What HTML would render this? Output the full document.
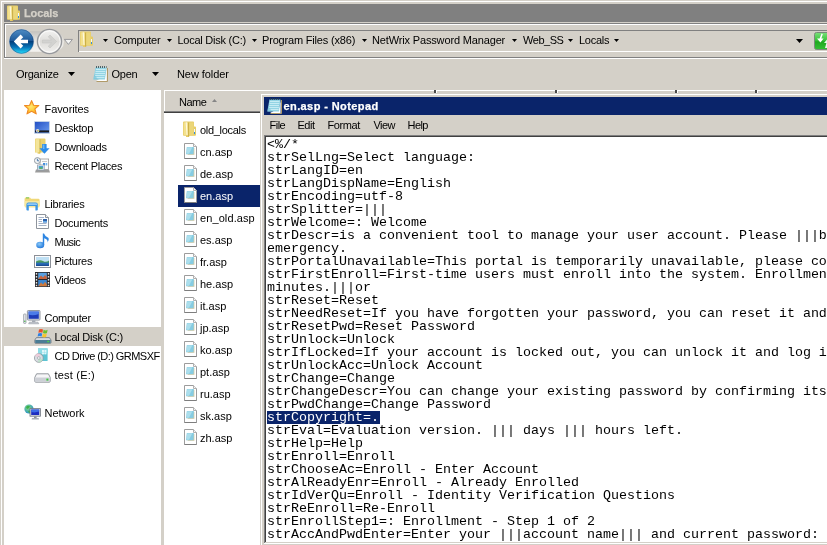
<!DOCTYPE html>
<html><head><meta charset="utf-8"><title>Locals</title>
<style>
html,body{margin:0;padding:0;}
body{width:827px;height:545px;overflow:hidden;background:#D4D0C8;position:relative;font-family:"Liberation Sans",sans-serif;font-size:11px;}
#root{position:absolute;left:0;top:0;width:827px;height:545px;overflow:hidden;background:#D4D0C8;will-change:transform;}
#root div,#root span.t,#root svg,#root pre{position:absolute;}
.t{white-space:pre;line-height:13px;height:13px;font-size:11px;color:#000;}
pre{margin:0;font-family:"Liberation Mono",monospace;font-size:13.33px;line-height:13px;white-space:pre;color:#000;}
.sel{color:#fff;}
</style></head><body><div id="root">

<div style="left:1px;top:1px;width:826px;height:1px;background:#FFFFFF;"></div>
<div style="left:1px;top:1px;width:1px;height:544px;background:#FFFFFF;"></div>
<div style="left:4px;top:4px;width:823px;height:18px;background:#808080;"></div>
<svg style="left:6px;top:5px" width="16" height="17" viewBox="0 0 16 17">
<path d="M1 1.2 Q1 0.4 2 0.4 H11 Q12 0.4 12 1.4 V5.5 H13 Q14 5.5 14 6.5 V14 Q14 14.8 13 14.8 H7 V16 H4 V14.8 H2 Q1 14.8 1 14 Z" fill="#E6CC66"/>
<path d="M1.6 1.4 H6.4 V14.2 H1.6 Z" fill="#F3E18E"/>
<path d="M3.6 1.2 H4.8 L5.4 14 H4.6 Z" fill="#FFFDF0" opacity=".85"/>
<path d="M6.1 1.4 H7.3 V15.6 H6.1 Z" fill="#C9AC45"/>
<path d="M7.2 1.4 H11.6 V14.4 H7.2 Z" fill="#EBD679"/>
<rect x="12" y="8" width="1" height="3" fill="#F4F8FF"/><rect x="12" y="11" width="1" height="2" fill="#2E8FE0"/>
</svg>
<span class="t" style="left:24px;top:7px;letter-spacing:-0.1px;color:#D4D0C8;font-weight:bold;-webkit-text-stroke:0.25px;">Locals</span>
<div style="left:4px;top:23px;width:823px;height:1px;background:#808080;"></div>
<div style="left:4px;top:23px;width:1px;height:35px;background:#808080;"></div>
<div style="left:5px;top:24px;width:822px;height:1px;background:#FFFFFF;"></div>
<div style="left:5px;top:24px;width:1px;height:33px;background:#FFFFFF;"></div>
<div style="left:4px;top:57px;width:823px;height:1px;background:#808080;"></div>
<div style="left:4px;top:58px;width:823px;height:1px;background:#FFFFFF;"></div>
<svg style="left:6px;top:28px" width="70" height="28" viewBox="0 0 70 28">
<defs>
<linearGradient id="pill" x1="0" y1="0" x2="0" y2="1"><stop offset="0" stop-color="#C4C2BE"/><stop offset=".5" stop-color="#E9E7E3"/><stop offset="1" stop-color="#F4F3F0"/></linearGradient>
<linearGradient id="bk" x1="0" y1="0" x2="0" y2="1"><stop offset="0" stop-color="#4E8CC4"/><stop offset=".48" stop-color="#1C5898"/><stop offset=".5" stop-color="#033F7C"/><stop offset=".74" stop-color="#0874B8"/><stop offset="1" stop-color="#24DCFC"/></linearGradient>
<linearGradient id="bk2" x1="0" y1="0" x2="0" y2="1"><stop offset="0" stop-color="#034E8E"/><stop offset=".6" stop-color="#0A7CC0"/><stop offset="1" stop-color="#18D8FA"/></linearGradient>
<linearGradient id="fw" x1="0" y1="0" x2="0" y2="1"><stop offset="0" stop-color="#F4F4F3"/><stop offset=".5" stop-color="#DEDDDA"/><stop offset="1" stop-color="#F2F1EF"/></linearGradient>
<clipPath id="ct"><rect x="0" y="0" width="70" height="13.5"/></clipPath>
<clipPath id="cb"><rect x="0" y="13.5" width="70" height="20"/></clipPath>
</defs>
<rect x="8" y="3.2" width="50" height="20.6" rx="10" fill="url(#pill)"/>
<circle cx="15.5" cy="13.5" r="12.7" fill="#C6CFD8"/>
<circle cx="15.5" cy="13.5" r="11.9" fill="url(#bk)"/>
<circle cx="15.5" cy="13.5" r="11.9" fill="none" stroke="#0B3C74" stroke-width=".8" opacity=".55"/>
<path d="M7.8 13.5 L14.6 6.6 L17.2 9.2 L14.6 11.7 H22 V15.3 H14.6 L17.2 17.8 L14.6 20.4 Z" fill="#fff"/>
<circle cx="43.5" cy="13.5" r="12.1" fill="url(#fw)" stroke="#96989C" stroke-width="1.3"/>
<circle cx="43.5" cy="13.5" r="10.6" fill="none" stroke="#fff" stroke-width="1" opacity=".7"/>
<path d="M50.6 13.5 L44 7 L42.2 8.8 L45.4 12 H36.4 V15 H45.4 L42.2 18.2 L44 20 Z" fill="#D2D2D0" stroke="#C2C2C0" stroke-width=".5"/>
<path d="M58.4 11.4 H66.4 L62.4 16.4 Z" fill="#F4F4F2" stroke="#8E9094" stroke-width=".9"/>
</svg>
<div style="left:78px;top:30px;width:749px;height:1px;background:#808080;"></div>
<div style="left:78px;top:30px;width:1px;height:22px;background:#808080;"></div>
<div style="left:79px;top:51px;width:748px;height:1px;background:#FFFFFF;"></div>
<svg style="left:79px;top:31px" width="16" height="17" viewBox="0 0 16 17">
<path d="M1 1.2 Q1 0.4 2 0.4 H11 Q12 0.4 12 1.4 V5.5 H13 Q14 5.5 14 6.5 V14 Q14 14.8 13 14.8 H7 V16 H4 V14.8 H2 Q1 14.8 1 14 Z" fill="#E6CC66"/>
<path d="M1.6 1.4 H6.4 V14.2 H1.6 Z" fill="#F3E18E"/>
<path d="M3.6 1.2 H4.8 L5.4 14 H4.6 Z" fill="#FFFDF0" opacity=".85"/>
<path d="M6.1 1.4 H7.3 V15.6 H6.1 Z" fill="#C9AC45"/>
<path d="M7.2 1.4 H11.6 V14.4 H7.2 Z" fill="#EBD679"/>
<rect x="12" y="8" width="1" height="3" fill="#F4F8FF"/><rect x="12" y="11" width="1" height="2" fill="#2E8FE0"/>
</svg>
<svg style="left:103px;top:39px" width="5" height="3" viewBox="0 0 5 3"><path d="M0 0 H5 L2.5 3 Z" fill="#000"/></svg>
<span class="t" style="left:114px;top:34px;letter-spacing:-0.25px;">Computer</span>
<svg style="left:167px;top:39px" width="5" height="3" viewBox="0 0 5 3"><path d="M0 0 H5 L2.5 3 Z" fill="#000"/></svg>
<span class="t" style="left:177.5px;top:34px;letter-spacing:-0.25px;">Local Disk (C:)</span>
<svg style="left:252px;top:39px" width="5" height="3" viewBox="0 0 5 3"><path d="M0 0 H5 L2.5 3 Z" fill="#000"/></svg>
<span class="t" style="left:262px;top:34px;letter-spacing:-0.18px;">Program Files (x86)</span>
<svg style="left:362px;top:39px" width="5" height="3" viewBox="0 0 5 3"><path d="M0 0 H5 L2.5 3 Z" fill="#000"/></svg>
<span class="t" style="left:372px;top:34px;letter-spacing:-0.15px;">NetWrix Password Manager</span>
<svg style="left:512px;top:39px" width="5" height="3" viewBox="0 0 5 3"><path d="M0 0 H5 L2.5 3 Z" fill="#000"/></svg>
<span class="t" style="left:523px;top:34px;letter-spacing:-0.45px;">Web_SS</span>
<svg style="left:568px;top:39px" width="5" height="3" viewBox="0 0 5 3"><path d="M0 0 H5 L2.5 3 Z" fill="#000"/></svg>
<span class="t" style="left:579px;top:34px;letter-spacing:-0.25px;">Locals</span>
<svg style="left:614px;top:39px" width="5" height="3" viewBox="0 0 5 3"><path d="M0 0 H5 L2.5 3 Z" fill="#000"/></svg>
<svg style="left:796px;top:39px" width="7" height="4" viewBox="0 0 7 4"><path d="M0 0 H7 L3.5 4 Z" fill="#000"/></svg>
<svg style="left:814px;top:32px" width="14" height="18" viewBox="0 0 14 18">
<defs><linearGradient id="gr" x1="0" y1="0" x2="0" y2="1"><stop offset="0" stop-color="#7BE07B"/><stop offset=".45" stop-color="#3CC43C"/><stop offset=".55" stop-color="#1FA81F"/><stop offset="1" stop-color="#35C035"/></linearGradient></defs>
<rect x="0.5" y="0.5" width="20" height="17" rx="2" fill="url(#gr)" stroke="#7A8A7A"/>
<path d="M7.6 1.6 L5.6 6.6 H3 L6.4 10.6 L9.6 6.6 H7.4 L8.8 2 Z" fill="#fff"/>
<path d="M13.4 7 L10 11 H12.4 L11 16 L14 16 L14 7 Z" fill="#E8F8E8"/>
</svg>
<span class="t" style="left:16px;top:68px;letter-spacing:-0.25px;">Organize</span>
<svg style="left:68px;top:72px" width="7" height="4" viewBox="0 0 7 4"><path d="M0 0 H7 L3.5 4 Z" fill="#000"/></svg>
<svg style="left:93px;top:66px" width="16" height="17" viewBox="0 0 16 17">
<path d="M3.5 15.5 H14.5 V2" fill="none" stroke="#B09A68" stroke-width="1"/>
<path d="M3 15 L13.6 15 L13.8 2 L12 10 Z" fill="#fff"/>
<path d="M2.4 1.4 H13.6 L12 13.4 H0.4 Z" fill="#93D4E4"/>
<path d="M3 3.5 H12.6 M2.6 5.5 H12.3 M2.3 7.5 H12 M2 9.5 H11.8 M1.6 11.5 H11.5" stroke="#C6ECF4" stroke-width="1"/>
<path d="M1.2 8 L0.4 13.4 H5 Z" fill="#7CC6DA" opacity=".7"/>
<path d="M3 1 h1 M5 1 h1 M7 1 h1 M9 1 h1 M11 1 h1 M13 1 h0.6" stroke="#27404A" stroke-width="1.4"/>
</svg>
<span class="t" style="left:111.5px;top:68px;letter-spacing:-0.25px;">Open</span>
<svg style="left:152px;top:72px" width="7" height="4" viewBox="0 0 7 4"><path d="M0 0 H7 L3.5 4 Z" fill="#000"/></svg>
<span class="t" style="left:177px;top:68px;letter-spacing:-0.07px;">New folder</span>
<div style="left:4px;top:90px;width:157px;height:455px;background:#fff;"></div>
<div style="left:4px;top:327px;width:157px;height:19px;background:#D4D0C8;"></div>
<svg style="left:24px;top:100px" width="16" height="15" viewBox="0 0 16 15">
<defs><radialGradient id="sg" cx=".45" cy=".45" r=".6"><stop offset="0" stop-color="#FFE873"/><stop offset=".6" stop-color="#FFC733"/><stop offset="1" stop-color="#F59A23"/></radialGradient></defs>
<path d="M7.6 0.6 L9.6 5.2 L14.8 5.6 L10.9 8.9 L12.2 13.9 L7.6 11.2 L3 13.9 L4.3 8.9 L0.5 5.6 L5.6 5.2 Z" fill="url(#sg)" stroke="#F08A24" stroke-width="1.1" stroke-linejoin="round"/>
</svg>
<span class="t" style="left:44.5px;top:103px;letter-spacing:-0.08px;">Favorites</span>
<svg style="left:34px;top:121px" width="16" height="13" viewBox="0 0 16 13">
<defs><linearGradient id="dg" x1="0" y1="0" x2="1" y2="1"><stop offset="0" stop-color="#2450C4"/><stop offset="1" stop-color="#6A9CF0"/></linearGradient></defs>
<rect x="0.3" y="0.3" width="15.4" height="12.4" fill="#A9BEDD"/>
<rect x="1" y="1" width="14" height="11" fill="url(#dg)"/>
<rect x="1" y="9.4" width="14" height="2" fill="#1C1C1C"/>
<circle cx="3.6" cy="9.8" r="1.7" fill="#E8F0FF"/>
<rect x="2.6" y="8.8" width="1" height="1" fill="#E84A2A"/><rect x="3.7" y="8.8" width="1" height="1" fill="#6BC22E"/><rect x="2.6" y="9.9" width="1" height="1" fill="#2C7BE0"/><rect x="3.7" y="9.9" width="1" height="1" fill="#F7C42A"/>
</svg>
<span class="t" style="left:54.5px;top:122px;letter-spacing:-0.25px;">Desktop</span>
<svg style="left:34px;top:138px" width="16" height="17" viewBox="0 0 16 17">
<path d="M1 1 Q1 0.4 2 0.4 H10.5 Q11.5 0.4 11.5 1.4 V14.5 H6 V15.8 H3.6 V14.5 H1 Z" fill="#E9D170"/>
<path d="M1.6 1.2 H5.6 V14 H1.6 Z" fill="#F4E59A"/>
<path d="M5.6 1.2 H6.4 V15.4 H5.6 Z" fill="#CDB24A"/>
<path d="M8.2 6 H12.6 V10.2 H15.6 L10.4 15.8 L5.4 10.2 H8.2 Z" fill="#2B8CEB"/>
<path d="M9 6.4 H10.4 V11 H9 Z" fill="#6CB6F6"/>
</svg>
<span class="t" style="left:54.5px;top:141px;letter-spacing:-0.25px;">Downloads</span>
<svg style="left:34px;top:157px" width="16" height="16" viewBox="0 0 16 16">
<path d="M2 12.5 H15 L16 15.5 H1 Z" fill="#9C9C9C"/>
<rect x="6" y="2" width="8.6" height="10.5" fill="#FCFCFC" stroke="#9A9A9A" stroke-width=".8"/>
<rect x="8" y="4" width="5" height="1" fill="#C8C8C8"/><rect x="9" y="6" width="2" height="2.4" fill="#3B8AE0"/><rect x="11.6" y="6" width="1.6" height="2.4" fill="#6FB2F0"/>
<rect x="3.6" y="8" width="6.6" height="5" fill="#F4F8FC" stroke="#8C9AA8" stroke-width=".8"/>
<rect x="4.6" y="9" width="4.6" height="2.8" fill="#4AA0D8"/><rect x="5.4" y="10.4" width="3" height="1.4" fill="#56B24A"/>
<circle cx="3.4" cy="3.6" r="3" fill="#F2F4F6" stroke="#8A949C" stroke-width=".9"/>
<path d="M3.4 1.8 V3.8 H5" fill="none" stroke="#3A6EA8" stroke-width=".9"/>
</svg>
<span class="t" style="left:54.5px;top:160px;letter-spacing:-0.25px;">Recent Places</span>
<svg style="left:24px;top:197px" width="16" height="14" viewBox="0 0 16 14">
<path d="M0.6 2 Q0.6 0.6 2 0.6 H6 L7 1.8 H14.4 Q15.6 1.8 15.6 3 V9 H0.6 Z" fill="#F0D878"/>
<path d="M2 0.4 H5 V1.4 H2 Z" fill="#6FC24A"/>
<path d="M0.6 4 H15.6 V9.5 Q15.6 10.6 14.4 10.6 H1.8 Q0.6 10.6 0.6 9.5 Z" fill="#F6E8A0"/>
<path d="M2.4 7.4 Q2.4 5.4 4.4 5.4 H11.8 Q13.8 5.4 13.8 7.4 V12.4 Q13.8 13.4 12.8 13.4 H11.4 V9 H4.8 V13.4 H3.4 Q2.4 13.4 2.4 12.4 Z" fill="#3C96E4"/>
<path d="M3.2 7.2 Q3.2 6.2 4.6 6.2 H11.6 Q13 6.2 13 7.2 V8 H3.2 Z" fill="#8CC8F6"/>
</svg>
<span class="t" style="left:44.5px;top:198px;letter-spacing:-0.25px;">Libraries</span>
<svg style="left:36px;top:214px" width="14" height="16" viewBox="0 0 14 16">
<path d="M0.5 0.5 H9.5 L12.5 3.5 V14.5 H0.5 Z" fill="#fff" stroke="#8E949C"/>
<path d="M9.5 0.5 V3.5 H12.5" fill="#EDEFF2" stroke="#8E949C"/>
<path d="M2.5 3.5 H8 M2.5 5.5 H6 M2.5 7.5 H6 M2.5 9.5 H10.5 M2.5 11.5 H10.5" stroke="#A6B4C8" stroke-width="1"/>
<rect x="7" y="5" width="4" height="3.4" fill="#2C5FA8"/><rect x="7" y="7" width="4" height="1.4" fill="#5FA6E6"/>
</svg>
<span class="t" style="left:54.5px;top:217px;letter-spacing:-0.25px;">Documents</span>
<svg style="left:36px;top:233px" width="14" height="16" viewBox="0 0 14 16">
<defs><radialGradient id="mg" cx=".4" cy=".35" r=".7"><stop offset="0" stop-color="#8CCBFA"/><stop offset="1" stop-color="#1E74D8"/></radialGradient></defs>
<ellipse cx="4.2" cy="12" rx="4" ry="3.2" fill="url(#mg)"/>
<path d="M6.8 12 V0.4 H8 Q8.6 3 12.6 5 Q13.4 7.6 11.4 9.6 Q12.4 6.6 8.2 5.2 V12 Z" fill="#2E86E2"/>
</svg>
<span class="t" style="left:54.5px;top:236px;letter-spacing:-0.6px;">Music</span>
<svg style="left:33.5px;top:255px" width="17" height="13" viewBox="0 0 17 13">
<rect x="0.5" y="0.5" width="16" height="12" fill="#FDFDFD" stroke="#8C9098"/>
<rect x="2" y="2" width="13" height="9" fill="#BFE0F4"/>
<path d="M2 6.6 Q6 4 9 6 T15 5.4 V8 H2 Z" fill="#4E9A5C"/>
<rect x="2" y="7.6" width="13" height="3.4" fill="#2A6CB8"/>
<rect x="2" y="9.6" width="13" height="1.4" fill="#1C4E96"/>
</svg>
<span class="t" style="left:54.5px;top:255px;letter-spacing:-0.25px;">Pictures</span>
<svg style="left:34.5px;top:272px" width="15" height="15" viewBox="0 0 15 15">
<rect x="0" y="0" width="15" height="15" fill="#2A2A2E"/>
<rect x="3.2" y="0.8" width="8.6" height="6.2" fill="#5AA0E0"/>
<path d="M3.2 7 L6 3.6 L8 5.4 L10 3 L11.8 5 V7 Z" fill="#C8643C"/>
<rect x="3.2" y="8" width="8.6" height="6.2" fill="#3C86D0"/>
<path d="M3.2 14.2 L6 10.6 L8 12.4 L10 10 L11.8 12 V14.2 Z" fill="#D07A3C"/>
<g fill="#E6E6E6"><rect x="0.8" y="1" width="1.4" height="1.6"/><rect x="0.8" y="4" width="1.4" height="1.6"/><rect x="0.8" y="7" width="1.4" height="1.6"/><rect x="0.8" y="10" width="1.4" height="1.6"/><rect x="0.8" y="12.8" width="1.4" height="1.4"/>
<rect x="12.8" y="1" width="1.4" height="1.6"/><rect x="12.8" y="4" width="1.4" height="1.6"/><rect x="12.8" y="7" width="1.4" height="1.6"/><rect x="12.8" y="10" width="1.4" height="1.6"/><rect x="12.8" y="12.8" width="1.4" height="1.4"/></g>
</svg>
<span class="t" style="left:54.5px;top:274px;letter-spacing:-0.4px;">Videos</span>
<svg style="left:23px;top:310px" width="18" height="15" viewBox="0 0 18 15">
<rect x="0.6" y="4" width="2.4" height="9.4" rx=".6" fill="#E6E8EC" stroke="#8A9098" stroke-width=".7"/>
<rect x="1.2" y="10.6" width="1.2" height="1.4" fill="#48B848"/>
<rect x="4.4" y="0.5" width="12.6" height="9.6" rx=".8" fill="#D8DCE4" stroke="#7C848E" stroke-width=".8"/>
<rect x="5.6" y="1.6" width="10.2" height="7.2" fill="#1E3CB8"/>
<path d="M5.6 1.6 H15.8 V4 Q10 6 5.6 4.6 Z" fill="#4C7CE8"/>
<rect x="9" y="10.2" width="3.4" height="2" fill="#A8AEB8"/>
<path d="M6.4 12.2 H15 L15.8 13.8 H5.6 Z" fill="#C4C8D0" stroke="#8A9098" stroke-width=".5"/>
</svg>
<span class="t" style="left:44.5px;top:312px;letter-spacing:-0.25px;">Computer</span>
<svg style="left:33.5px;top:328px" width="18" height="16" viewBox="0 0 18 16">
<path d="M2.4 9.6 H15.4 L17 12 V14.6 Q17 15.4 16 15.4 H1.8 Q0.8 15.4 0.8 14.6 V12 Z" fill="#D6DADF" stroke="#5A6670" stroke-width=".7"/>
<rect x="1.2" y="12" width="15.4" height="3" fill="#4A7C94"/>
<rect x="13.2" y="12.8" width="2" height="1.4" fill="#4CD04C"/>
<path d="M5 1.6 Q7 0.4 9 1.6 L8.4 4.8 Q6.6 3.8 4.4 4.8 Z" fill="#E8502A"/>
<path d="M9.6 1.8 Q11.6 3 13.6 1.8 L13 5 Q11 6.2 9 5 Z" fill="#6CC030"/>
<path d="M4.2 5.4 Q6.2 4.4 8.2 5.4 L7.6 8.6 Q5.6 7.6 3.6 8.6 Z" fill="#2C80E4"/>
<path d="M8.8 5.6 Q10.8 6.8 12.8 5.6 L12.2 8.8 Q10.2 10 8.2 8.8 Z" fill="#F8C42C"/>
</svg>
<span class="t" style="left:54.5px;top:331px;letter-spacing:-0.25px;">Local Disk (C:)</span>
<div style="left:4px;top:347px;width:157px;height:19px;overflow:hidden">
</div>
<svg style="left:34px;top:348px" width="14" height="15" viewBox="0 0 14 15">
<path d="M4 0.4 H13.6 V13 H4 Z" fill="#5CC4D4"/>
<path d="M4 0.4 H13.6 V5 Q9 7 4 5 Z" fill="#8CDCE6"/>
<rect x="8" y="2" width="2" height="2" fill="#DFF6FA"/><rect x="10.4" y="2" width="2" height="2" fill="#DFF6FA"/><rect x="8" y="4.4" width="2" height="2" fill="#DFF6FA"/><rect x="10.4" y="4.4" width="2" height="2" fill="#DFF6FA"/>
<circle cx="4.8" cy="10" r="4.4" fill="#D8DCE2" stroke="#8A9098" stroke-width=".7"/>
<path d="M4.8 10 L1 7.6 A4.4 4.4 0 0 1 6 5.8 Z" fill="#F2C8D8" opacity=".8"/>
<path d="M4.8 10 L8.8 11.6 A4.4 4.4 0 0 1 4 14.2 Z" fill="#B8E0C4" opacity=".8"/>
<circle cx="4.8" cy="10" r="1.3" fill="#fff" stroke="#8A9098" stroke-width=".6"/>
</svg>
<span class="t" style="left:54.5px;top:350px;letter-spacing:-0.55px;">CD Drive (D:) GRMSXF</span>
<svg style="left:33.5px;top:372.5px" width="17" height="10" viewBox="0 0 17 10">
<path d="M2.6 0.8 H14.4 L16.2 4.4 V8.2 Q16.2 9.2 15.2 9.2 H1.8 Q0.8 9.2 0.8 8.2 V4.4 Z" fill="#F6F6F8" stroke="#7A8088" stroke-width=".8"/>
<path d="M1.2 4.6 H15.8 V8.2 Q15.8 8.8 15.2 8.8 H1.8 Q1.2 8.8 1.2 8.2 Z" fill="#CDD0D6"/>
<rect x="12.4" y="5.6" width="2" height="2" fill="#3CC83C"/>
</svg>
<span class="t" style="left:54.5px;top:369px;letter-spacing:0.2px;">test (E:)</span>
<svg style="left:24px;top:404px" width="17" height="16" viewBox="0 0 17 16">
<defs><radialGradient id="ng" cx=".4" cy=".35" r=".7"><stop offset="0" stop-color="#8CE07C"/><stop offset="1" stop-color="#1E8AD0"/></radialGradient></defs>
<circle cx="5" cy="5" r="4.6" fill="url(#ng)"/>
<path d="M2 3 Q4 1 6 2.4 Q5 4.4 3 5 Z M4 7 Q6 6 7 8 L5.4 9.4 Z" fill="#3CB04C"/>
<rect x="6" y="4.6" width="10.4" height="7.6" fill="#D4D8E0" stroke="#6E7680" stroke-width=".8"/>
<rect x="7.2" y="5.6" width="8" height="5.4" fill="#1C2CC0"/>
<path d="M7.2 5.6 H15.2 V7.6 Q11 9 7.2 8 Z" fill="#3C6CE8"/>
<rect x="10" y="12.4" width="2.6" height="1.6" fill="#8A9098"/>
<path d="M8 14 H14.6 L15 15.4 H7.6 Z" fill="#A8AEB8"/>
</svg>
<span class="t" style="left:44.5px;top:407px;letter-spacing:-0.05px;">Network</span>
<div style="left:161px;top:90px;width:3px;height:455px;background:#D4D0C8;"></div>
<div style="left:164px;top:90px;width:663px;height:455px;background:#fff;"></div>
<div style="left:164px;top:90px;width:663px;height:1px;background:#FFFFFF;"></div>
<div style="left:164px;top:91px;width:1px;height:20px;background:#FFFFFF;"></div>
<div style="left:165px;top:91px;width:662px;height:20px;background:#D4D0C8;"></div>
<div style="left:164px;top:111px;width:663px;height:1px;background:#808080;"></div>
<div style="left:164px;top:112px;width:663px;height:1px;background:#404040;"></div>
<span class="t" style="left:179px;top:96px;letter-spacing:-0.5px;">Name</span>
<svg style="left:212px;top:99px" width="5" height="3" viewBox="0 0 5 3"><path d="M2.5 0 L5 3 H0 Z" fill="#858585"/></svg>
<div style="left:434px;top:90px;width:2px;height:3px;background:#4A4A4A;"></div>
<div style="left:436px;top:90px;width:1px;height:3px;background:#FFFFFF;"></div>
<div style="left:555px;top:90px;width:2px;height:3px;background:#4A4A4A;"></div>
<div style="left:557px;top:90px;width:1px;height:3px;background:#FFFFFF;"></div>
<div style="left:675px;top:90px;width:2px;height:3px;background:#4A4A4A;"></div>
<div style="left:677px;top:90px;width:1px;height:3px;background:#FFFFFF;"></div>
<div style="left:755px;top:90px;width:2px;height:3px;background:#4A4A4A;"></div>
<div style="left:757px;top:90px;width:1px;height:3px;background:#FFFFFF;"></div>
<svg style="left:182px;top:121px" width="16" height="17" viewBox="0 0 16 17">
<path d="M1 1.2 Q1 0.4 2 0.4 H11 Q12 0.4 12 1.4 V5.5 H13 Q14 5.5 14 6.5 V14 Q14 14.8 13 14.8 H7 V16 H4 V14.8 H2 Q1 14.8 1 14 Z" fill="#E6CC66"/>
<path d="M1.6 1.4 H6.4 V14.2 H1.6 Z" fill="#F3E18E"/>
<path d="M3.6 1.2 H4.8 L5.4 14 H4.6 Z" fill="#FFFDF0" opacity=".85"/>
<path d="M6.1 1.4 H7.3 V15.6 H6.1 Z" fill="#C9AC45"/>
<path d="M7.2 1.4 H11.6 V14.4 H7.2 Z" fill="#EBD679"/>
<rect x="12" y="8" width="1" height="3" fill="#F4F8FF"/><rect x="12" y="11" width="1" height="2" fill="#2E8FE0"/>
</svg>
<span class="t" style="left:200px;top:124px;letter-spacing:-0.3px;">old_locals</span>
<svg style="left:184px;top:143px" width="14" height="17" viewBox="0 0 14 17">
<path d="M0.5 0.5 H9.5 L12.5 3.5 V15.5 H0.5 Z" fill="#fff" stroke="#9C9C9C"/>
<path d="M0.5 15.5 H12.5" stroke="#7E7E7E"/>
<path d="M9.5 0.5 V3.5 H12.5" fill="#F4F4F4" stroke="#B0B0B0"/>
<path d="M3.6 5 H10.4 V11.8 H3.6 Z" fill="#D6C79C"/>
<path d="M2.8 4 H9.9 L9.5 11.2 H2 Z" fill="#86CCE2"/>
<path d="M3.2 4.3 H8.4 L5 10.8 H2.4 Z" fill="#B4E2EF" opacity=".8"/>
</svg>
<span class="t" style="left:200px;top:146px;">cn.asp</span>
<svg style="left:184px;top:165px" width="14" height="17" viewBox="0 0 14 17">
<path d="M0.5 0.5 H9.5 L12.5 3.5 V15.5 H0.5 Z" fill="#fff" stroke="#9C9C9C"/>
<path d="M0.5 15.5 H12.5" stroke="#7E7E7E"/>
<path d="M9.5 0.5 V3.5 H12.5" fill="#F4F4F4" stroke="#B0B0B0"/>
<path d="M3.6 5 H10.4 V11.8 H3.6 Z" fill="#D6C79C"/>
<path d="M2.8 4 H9.9 L9.5 11.2 H2 Z" fill="#86CCE2"/>
<path d="M3.2 4.3 H8.4 L5 10.8 H2.4 Z" fill="#B4E2EF" opacity=".8"/>
</svg>
<span class="t" style="left:200px;top:168px;">de.asp</span>
<div style="left:178px;top:185px;width:649px;height:22px;background:#0A246A;"></div>
<svg style="left:184px;top:187px" width="14" height="17" viewBox="0 0 14 17">
<path d="M0.5 0.5 H9.5 L12.5 3.5 V15.5 H0.5 Z" fill="#fff" stroke="#9C9C9C"/>
<path d="M0.5 15.5 H12.5" stroke="#7E7E7E"/>
<path d="M9.5 0.5 V3.5 H12.5" fill="#F4F4F4" stroke="#B0B0B0"/>
<path d="M3.6 5 H10.4 V11.8 H3.6 Z" fill="#D6C79C"/>
<path d="M2.8 4 H9.9 L9.5 11.2 H2 Z" fill="#86CCE2"/>
<path d="M3.2 4.3 H8.4 L5 10.8 H2.4 Z" fill="#B4E2EF" opacity=".8"/>
</svg>
<span class="t" style="left:200px;top:190px;color:#fff;">en.asp</span>
<svg style="left:184px;top:209px" width="14" height="17" viewBox="0 0 14 17">
<path d="M0.5 0.5 H9.5 L12.5 3.5 V15.5 H0.5 Z" fill="#fff" stroke="#9C9C9C"/>
<path d="M0.5 15.5 H12.5" stroke="#7E7E7E"/>
<path d="M9.5 0.5 V3.5 H12.5" fill="#F4F4F4" stroke="#B0B0B0"/>
<path d="M3.6 5 H10.4 V11.8 H3.6 Z" fill="#D6C79C"/>
<path d="M2.8 4 H9.9 L9.5 11.2 H2 Z" fill="#86CCE2"/>
<path d="M3.2 4.3 H8.4 L5 10.8 H2.4 Z" fill="#B4E2EF" opacity=".8"/>
</svg>
<span class="t" style="left:200px;top:212px;letter-spacing:0.1px;">en_old.asp</span>
<svg style="left:184px;top:231px" width="14" height="17" viewBox="0 0 14 17">
<path d="M0.5 0.5 H9.5 L12.5 3.5 V15.5 H0.5 Z" fill="#fff" stroke="#9C9C9C"/>
<path d="M0.5 15.5 H12.5" stroke="#7E7E7E"/>
<path d="M9.5 0.5 V3.5 H12.5" fill="#F4F4F4" stroke="#B0B0B0"/>
<path d="M3.6 5 H10.4 V11.8 H3.6 Z" fill="#D6C79C"/>
<path d="M2.8 4 H9.9 L9.5 11.2 H2 Z" fill="#86CCE2"/>
<path d="M3.2 4.3 H8.4 L5 10.8 H2.4 Z" fill="#B4E2EF" opacity=".8"/>
</svg>
<span class="t" style="left:200px;top:234px;">es.asp</span>
<svg style="left:184px;top:253px" width="14" height="17" viewBox="0 0 14 17">
<path d="M0.5 0.5 H9.5 L12.5 3.5 V15.5 H0.5 Z" fill="#fff" stroke="#9C9C9C"/>
<path d="M0.5 15.5 H12.5" stroke="#7E7E7E"/>
<path d="M9.5 0.5 V3.5 H12.5" fill="#F4F4F4" stroke="#B0B0B0"/>
<path d="M3.6 5 H10.4 V11.8 H3.6 Z" fill="#D6C79C"/>
<path d="M2.8 4 H9.9 L9.5 11.2 H2 Z" fill="#86CCE2"/>
<path d="M3.2 4.3 H8.4 L5 10.8 H2.4 Z" fill="#B4E2EF" opacity=".8"/>
</svg>
<span class="t" style="left:200px;top:256px;">fr.asp</span>
<svg style="left:184px;top:275px" width="14" height="17" viewBox="0 0 14 17">
<path d="M0.5 0.5 H9.5 L12.5 3.5 V15.5 H0.5 Z" fill="#fff" stroke="#9C9C9C"/>
<path d="M0.5 15.5 H12.5" stroke="#7E7E7E"/>
<path d="M9.5 0.5 V3.5 H12.5" fill="#F4F4F4" stroke="#B0B0B0"/>
<path d="M3.6 5 H10.4 V11.8 H3.6 Z" fill="#D6C79C"/>
<path d="M2.8 4 H9.9 L9.5 11.2 H2 Z" fill="#86CCE2"/>
<path d="M3.2 4.3 H8.4 L5 10.8 H2.4 Z" fill="#B4E2EF" opacity=".8"/>
</svg>
<span class="t" style="left:200px;top:278px;">he.asp</span>
<svg style="left:184px;top:297px" width="14" height="17" viewBox="0 0 14 17">
<path d="M0.5 0.5 H9.5 L12.5 3.5 V15.5 H0.5 Z" fill="#fff" stroke="#9C9C9C"/>
<path d="M0.5 15.5 H12.5" stroke="#7E7E7E"/>
<path d="M9.5 0.5 V3.5 H12.5" fill="#F4F4F4" stroke="#B0B0B0"/>
<path d="M3.6 5 H10.4 V11.8 H3.6 Z" fill="#D6C79C"/>
<path d="M2.8 4 H9.9 L9.5 11.2 H2 Z" fill="#86CCE2"/>
<path d="M3.2 4.3 H8.4 L5 10.8 H2.4 Z" fill="#B4E2EF" opacity=".8"/>
</svg>
<span class="t" style="left:200px;top:300px;">it.asp</span>
<svg style="left:184px;top:319px" width="14" height="17" viewBox="0 0 14 17">
<path d="M0.5 0.5 H9.5 L12.5 3.5 V15.5 H0.5 Z" fill="#fff" stroke="#9C9C9C"/>
<path d="M0.5 15.5 H12.5" stroke="#7E7E7E"/>
<path d="M9.5 0.5 V3.5 H12.5" fill="#F4F4F4" stroke="#B0B0B0"/>
<path d="M3.6 5 H10.4 V11.8 H3.6 Z" fill="#D6C79C"/>
<path d="M2.8 4 H9.9 L9.5 11.2 H2 Z" fill="#86CCE2"/>
<path d="M3.2 4.3 H8.4 L5 10.8 H2.4 Z" fill="#B4E2EF" opacity=".8"/>
</svg>
<span class="t" style="left:200px;top:322px;">jp.asp</span>
<svg style="left:184px;top:341px" width="14" height="17" viewBox="0 0 14 17">
<path d="M0.5 0.5 H9.5 L12.5 3.5 V15.5 H0.5 Z" fill="#fff" stroke="#9C9C9C"/>
<path d="M0.5 15.5 H12.5" stroke="#7E7E7E"/>
<path d="M9.5 0.5 V3.5 H12.5" fill="#F4F4F4" stroke="#B0B0B0"/>
<path d="M3.6 5 H10.4 V11.8 H3.6 Z" fill="#D6C79C"/>
<path d="M2.8 4 H9.9 L9.5 11.2 H2 Z" fill="#86CCE2"/>
<path d="M3.2 4.3 H8.4 L5 10.8 H2.4 Z" fill="#B4E2EF" opacity=".8"/>
</svg>
<span class="t" style="left:200px;top:344px;">ko.asp</span>
<svg style="left:184px;top:363px" width="14" height="17" viewBox="0 0 14 17">
<path d="M0.5 0.5 H9.5 L12.5 3.5 V15.5 H0.5 Z" fill="#fff" stroke="#9C9C9C"/>
<path d="M0.5 15.5 H12.5" stroke="#7E7E7E"/>
<path d="M9.5 0.5 V3.5 H12.5" fill="#F4F4F4" stroke="#B0B0B0"/>
<path d="M3.6 5 H10.4 V11.8 H3.6 Z" fill="#D6C79C"/>
<path d="M2.8 4 H9.9 L9.5 11.2 H2 Z" fill="#86CCE2"/>
<path d="M3.2 4.3 H8.4 L5 10.8 H2.4 Z" fill="#B4E2EF" opacity=".8"/>
</svg>
<span class="t" style="left:200px;top:366px;">pt.asp</span>
<svg style="left:184px;top:385px" width="14" height="17" viewBox="0 0 14 17">
<path d="M0.5 0.5 H9.5 L12.5 3.5 V15.5 H0.5 Z" fill="#fff" stroke="#9C9C9C"/>
<path d="M0.5 15.5 H12.5" stroke="#7E7E7E"/>
<path d="M9.5 0.5 V3.5 H12.5" fill="#F4F4F4" stroke="#B0B0B0"/>
<path d="M3.6 5 H10.4 V11.8 H3.6 Z" fill="#D6C79C"/>
<path d="M2.8 4 H9.9 L9.5 11.2 H2 Z" fill="#86CCE2"/>
<path d="M3.2 4.3 H8.4 L5 10.8 H2.4 Z" fill="#B4E2EF" opacity=".8"/>
</svg>
<span class="t" style="left:200px;top:388px;">ru.asp</span>
<svg style="left:184px;top:407px" width="14" height="17" viewBox="0 0 14 17">
<path d="M0.5 0.5 H9.5 L12.5 3.5 V15.5 H0.5 Z" fill="#fff" stroke="#9C9C9C"/>
<path d="M0.5 15.5 H12.5" stroke="#7E7E7E"/>
<path d="M9.5 0.5 V3.5 H12.5" fill="#F4F4F4" stroke="#B0B0B0"/>
<path d="M3.6 5 H10.4 V11.8 H3.6 Z" fill="#D6C79C"/>
<path d="M2.8 4 H9.9 L9.5 11.2 H2 Z" fill="#86CCE2"/>
<path d="M3.2 4.3 H8.4 L5 10.8 H2.4 Z" fill="#B4E2EF" opacity=".8"/>
</svg>
<span class="t" style="left:200px;top:410px;">sk.asp</span>
<svg style="left:184px;top:429px" width="14" height="17" viewBox="0 0 14 17">
<path d="M0.5 0.5 H9.5 L12.5 3.5 V15.5 H0.5 Z" fill="#fff" stroke="#9C9C9C"/>
<path d="M0.5 15.5 H12.5" stroke="#7E7E7E"/>
<path d="M9.5 0.5 V3.5 H12.5" fill="#F4F4F4" stroke="#B0B0B0"/>
<path d="M3.6 5 H10.4 V11.8 H3.6 Z" fill="#D6C79C"/>
<path d="M2.8 4 H9.9 L9.5 11.2 H2 Z" fill="#86CCE2"/>
<path d="M3.2 4.3 H8.4 L5 10.8 H2.4 Z" fill="#B4E2EF" opacity=".8"/>
</svg>
<span class="t" style="left:200px;top:432px;">zh.asp</span>
<div style="left:260px;top:93px;width:567px;height:452px;background:#D4D0C8;"></div>
<div style="left:261px;top:94px;width:566px;height:1px;background:#FFFFFF;"></div>
<div style="left:261px;top:94px;width:1px;height:451px;background:#FFFFFF;"></div>
<div style="left:264px;top:97px;width:563px;height:18px;background:#0A246A;"></div>
<svg style="left:267px;top:98px" width="16" height="17" viewBox="0 0 16 17">
<path d="M3.5 15.5 H14.5 V2" fill="none" stroke="#B09A68" stroke-width="1"/>
<path d="M3 15 L13.6 15 L13.8 2 L12 10 Z" fill="#fff"/>
<path d="M2.4 1.4 H13.6 L12 13.4 H0.4 Z" fill="#93D4E4"/>
<path d="M3 3.5 H12.6 M2.6 5.5 H12.3 M2.3 7.5 H12 M2 9.5 H11.8 M1.6 11.5 H11.5" stroke="#C6ECF4" stroke-width="1"/>
<path d="M1.2 8 L0.4 13.4 H5 Z" fill="#7CC6DA" opacity=".7"/>
<path d="M3 1 h1 M5 1 h1 M7 1 h1 M9 1 h1 M11 1 h1 M13 1 h0.6" stroke="#27404A" stroke-width="1.4"/>
</svg>
<span class="t" style="left:283.5px;top:100px;letter-spacing:0.4px;color:#fff;font-weight:bold;-webkit-text-stroke:0.25px;">en.asp - Notepad</span>
<span class="t" style="left:269.5px;top:119px;letter-spacing:-0.5px;">File</span>
<span class="t" style="left:297.5px;top:119px;letter-spacing:-0.5px;">Edit</span>
<span class="t" style="left:327.5px;top:119px;letter-spacing:-0.4px;">Format</span>
<span class="t" style="left:373.5px;top:119px;letter-spacing:-0.6px;">View</span>
<span class="t" style="left:407.5px;top:119px;letter-spacing:-0.55px;">Help</span>
<div style="left:264px;top:135px;width:563px;height:1px;background:#808080;"></div>
<div style="left:264px;top:135px;width:1px;height:408px;background:#808080;"></div>
<div style="left:265px;top:136px;width:562px;height:1px;background:#404040;"></div>
<div style="left:265px;top:136px;width:1px;height:406px;background:#404040;"></div>
<div style="left:266px;top:137px;width:561px;height:405px;background:#fff;"></div>
<div style="left:265px;top:542px;width:562px;height:1px;background:#D4D0C8;"></div>
<div style="left:264px;top:543px;width:563px;height:1px;background:#FFFFFF;"></div>
<div style="left:267px;top:411px;width:113px;height:13px;background:#0A246A;"></div>
<pre style="left:267px;top:138px;width:560px;height:407px;overflow:hidden">&lt;%/*
strSelLng=Select language:
strLangID=en
strLangDispName=English
strEncoding=utf-8
strSplitter=|||
strWelcome=: Welcome
strDescr=is a convenient tool to manage your user account. Please |||before using it in an
emergency.
strPortalUnavailable=This portal is temporarily unavailable, please contact your administrator.
strFirstEnroll=First-time users must enroll into the system. Enrollment takes only a few
minutes.|||or
strReset=Reset
strNeedReset=If you have forgotten your password, you can reset it and log in.
strResetPwd=Reset Password
strUnlock=Unlock
strIfLocked=If your account is locked out, you can unlock it and log in.
strUnlockAcc=Unlock Account
strChange=Change
strChangeDescr=You can change your existing password by confirming its current value.
strPwdChange=Change Password
<span class="sel">strCopyright=.</span>
strEval=Evaluation version. ||| days ||| hours left.
strHelp=Help
strEnroll=Enroll
strChooseAc=Enroll - Enter Account
strAlReadyEnr=Enroll - Already Enrolled
strIdVerQu=Enroll - Identity Verification Questions
strReEnroll=Re-Enroll
strEnrollStep1=: Enrollment - Step 1 of 2
strAccAndPwdEnter=Enter your |||account name||| and current password:</pre>
</div></body></html>
